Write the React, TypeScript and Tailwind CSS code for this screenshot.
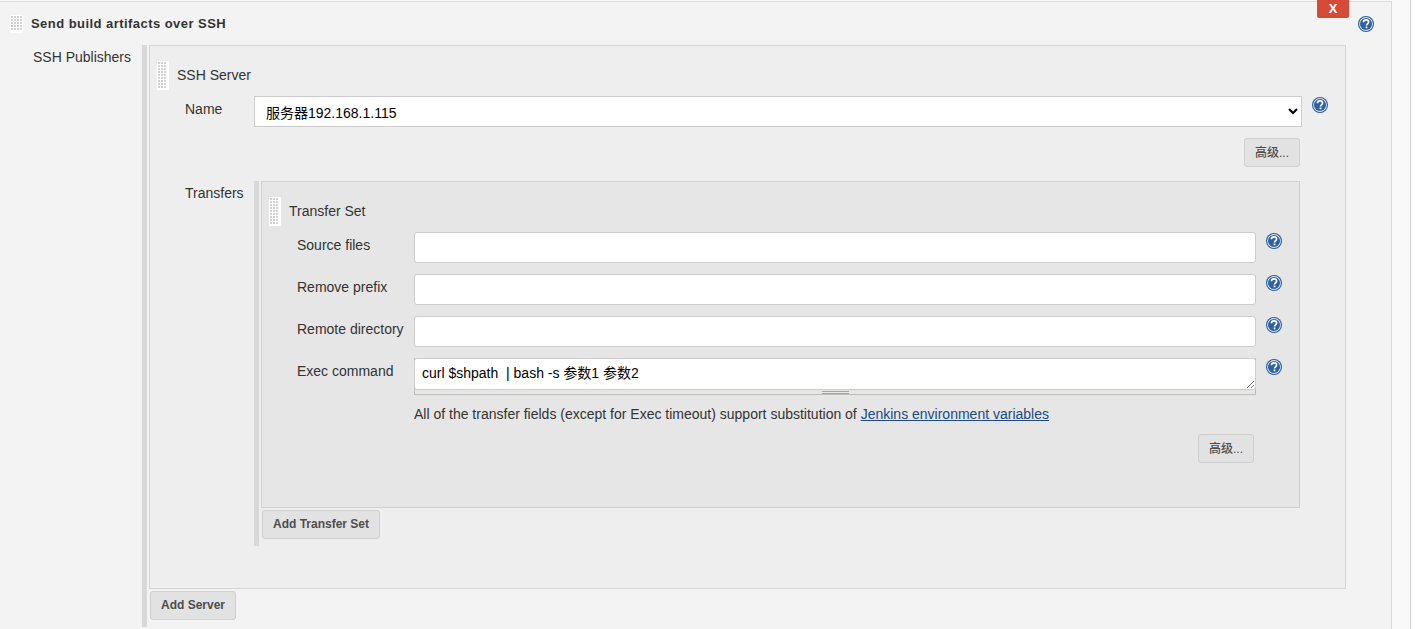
import type { ReactNode } from 'react';

const cjk = 'font-["Liberation_Sans","Noto_Sans_CJK_SC",sans-serif]';

function Grip({ w = 12, h = 29 }: { w?: number; h?: number }) {
  const dots = [];
  for (let y = 1; y < h - 2; y += 3) {
    for (let x = 1; x < w - 2; x += 3) {
      dots.push(<rect key={`${x}-${y}`} x={x} y={y} width="2" height="2" fill="#d2d2d2" />);
    }
  }
  return (
    <svg width={w} height={h} viewBox={`0 0 ${w} ${h}`} className="shrink-0">
      <rect width={w} height={h} fill="#fff" />
      {dots}
    </svg>
  );
}

function Help() {
  return (
    <svg width="16" height="16" viewBox="0 0 16 16" className="shrink-0">
      <circle cx="8" cy="8" r="8" fill="#2c5c9c" />
      <circle cx="8" cy="8" r="6.9" fill="#dfe7f2" />
      <circle cx="8" cy="8" r="6" fill="#2f609f" />
      <path d="M5.4 6.2C5.5 4.6 6.7 3.8 8 3.8c1.5 0 2.6.9 2.6 2.2 0 1.9-2.1 1.8-2.1 3.6" fill="none" stroke="#fff" strokeWidth="1.7" />
      <rect x="7.6" y="10.5" width="1.8" height="1.8" fill="#fff" />
    </svg>
  );
}

function Btn({ children, className = '' }: { children: ReactNode; className?: string }) {
  return (
    <button className={`flex h-[29px] items-center justify-center rounded-[3px] border border-[#cfcfcf] bg-[#e2e2e2] text-[12px] text-[#4d4d4d] ${className}`}>
      {children}
    </button>
  );
}

function Field({ label, children }: { label: string; children: ReactNode }) {
  return (
    <div className="flex h-[42px]">
      <div className="w-[117px] pt-[3px] text-[14px] leading-[20px] text-[#333]">{label}</div>
      <div className="w-[842px] shrink-0">{children}</div>
      <div className="ml-[10px] pt-[1px]">
        <Help />
      </div>
    </div>
  );
}

function TextBox() {
  return <input className="h-[31px] w-full rounded-[3px] border border-[#cccccc] bg-white" />;
}

export default function App() {
  return (
    <div className={`h-[629px] w-[1417px] overflow-hidden bg-white ${cjk}`}>
      <div className="h-[629px] w-[1411px] border-r border-[#cfcfcf] bg-[#f9f9f9] pt-[1px]">
        <div className="relative h-[640px] w-[1392px] border-t border-r border-[#d9d9d9] bg-[#f3f3f3] pt-[13px] pl-[10px]">
          <div className="absolute top-[-2px] left-[1317px] flex h-[18px] w-[32px] items-center justify-center rounded-b-[2px] bg-[#d64a38] text-[13px] font-bold text-white">
            X
          </div>
          <div className="absolute top-[14px] left-[1358px]">
            <Help />
          </div>

          <div className="flex h-[18px] items-center gap-[8px]">
            <Grip w={13} h={18} />
            <span className="text-[13px] font-bold tracking-[0.45px] text-[#333]">Send build artifacts over SSH</span>
          </div>

          <div className="mt-[12px] flex">
            <div className="w-[132px] pt-[2px] pr-[11px] text-right text-[14px] leading-[20px] text-[#333]">SSH Publishers</div>

            <div className="border-l-[5px] border-[#d8d8d8] pb-[7px] pl-[2px]">
              <div className="h-[544px] w-[1197px] border border-[#d5d5d5] bg-[#eeeeee] pt-[15px] pl-[7px]">
                <div className="flex items-center gap-[8px]">
                  <Grip />
                  <span className="text-[14px] text-[#333]">SSH Server</span>
                </div>

                <div className="mt-[6px] flex">
                  <div className="w-[97px] pt-[3px] pl-[28px] text-[14px] leading-[20px] text-[#333]">Name</div>
                  <select className="h-[31px] w-[1048px] rounded-none border border-[#cccccc] bg-white pt-[2px] pl-[7px] text-[14px] text-black">
                    <option>服务器192.168.1.115</option>
                  </select>
                  <div className="ml-[10px] pt-[1px]">
                    <Help />
                  </div>
                </div>

                <div className="mt-[11px] flex w-[1143px] justify-end">
                  <Btn className="w-[56px] font-medium">高级...</Btn>
                </div>

                <div className="mt-[14px] flex">
                  <div className="w-[97px] pt-[2px] pl-[28px] text-[14px] leading-[20px] text-[#333]">Transfers</div>
                  <div className="border-l-[5px] border-[#d8d8d8] pb-[7px] pl-[2px]">
                    <div className="h-[327px] w-[1039px] border border-[#d0d0d0] bg-[#e6e6e6] pt-[15px] pl-[7px]">
                      <div className="flex items-center gap-[8px]">
                        <Grip />
                        <span className="text-[14px] text-[#333]">Transfer Set</span>
                      </div>
                      <div className="mt-[6px] pl-[28px]">
                        <Field label="Source files"><TextBox /></Field>
                        <Field label="Remove prefix"><TextBox /></Field>
                        <Field label="Remote directory"><TextBox /></Field>
                        <Field label="Exec command">
                          <div className="h-[37px] border-b border-x border-[#bdbdb5] bg-[#e6e6e6]">
                            <textarea
                              readOnly
                              className="mx-[-1px] block h-[32px] w-[842px] rounded-[3px] border border-[#cccccc] bg-white px-[7px] py-[4px] text-[14px] leading-[20px] text-black"
                              value="curl $shpath  | bash -s 参数1 参数2"
                            />
                            <div className="mx-auto mt-[1px] h-[3px] w-[27px] border-y border-[#a8a8a8]" />
                          </div>
                        </Field>
                      </div>
                      <div className="mt-[4px] pl-[145px] text-[14px] leading-[20px] text-[#333]">
                        All of the transfer fields (except for Exec timeout) support substitution of{' '}
                        <a href="#" className="text-[#204a87] underline">Jenkins environment variables</a>
                      </div>
                      <div className="mt-[10px] flex w-[985px] justify-end">
                        <Btn className="w-[56px] font-medium">高级...</Btn>
                      </div>
                    </div>
                    <Btn className="mt-[2px] ml-[1px] w-[118px] pb-[1px] font-bold">Add Transfer Set</Btn>
                  </div>
                </div>
              </div>
              <Btn className="mt-[2px] ml-[1px] w-[86px] pb-[1px] font-bold">Add Server</Btn>
            </div>
          </div>
        </div>
      </div>
    </div>
  );
}
